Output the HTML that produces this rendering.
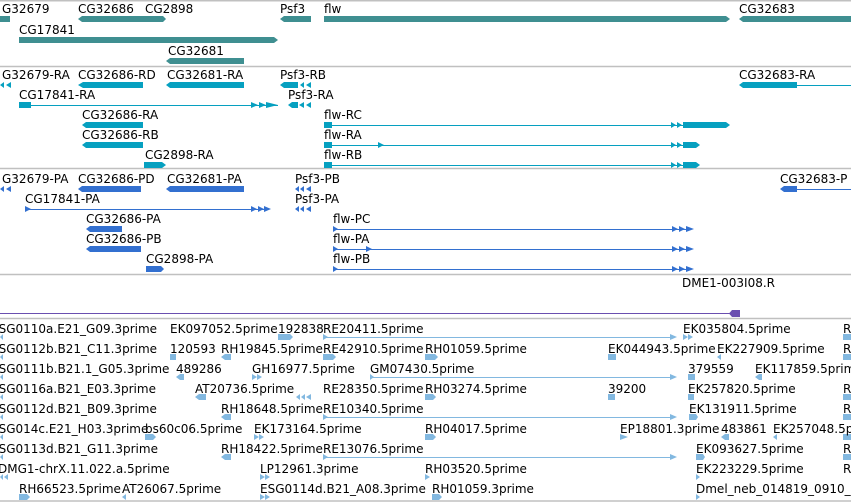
<!DOCTYPE html>
<html><head><meta charset="utf-8"><style>
html,body{margin:0;padding:0;background:#fff;width:851px;height:502px;overflow:hidden}
svg{display:block}
text{font-family:"DejaVu Sans","Liberation Sans",sans-serif;font-size:12px;fill:#000}
</style></head><body>
<svg width="851" height="502" viewBox="0 0 851 502" xmlns="http://www.w3.org/2000/svg">
<g stroke="#c0c0c0" stroke-width="1.5">
<line x1="0" y1="0.75" x2="851" y2="0.75"/>
<line x1="0" y1="66.5" x2="851" y2="66.5"/>
<line x1="0" y1="168.5" x2="851" y2="168.5"/>
<line x1="0" y1="274.5" x2="851" y2="274.5"/>
<line x1="0" y1="318.5" x2="851" y2="318.5"/>
<line x1="0" y1="501" x2="851" y2="501"/>
</g>
<!-- Track 1 genes -->
<g fill="#3f8f91">
<rect x="0" y="16" width="10" height="6"/>
<polygon points="78,19 82,16 163,16 166,19 163,22 82,22"/>
<polygon points="280,19 284,16 311,16 311,22 284,22"/>
<polygon points="324,16 726,16 730,19 726,22 324,22"/>
<polygon points="739,19 743,16 851,16 851,22 743,22"/>
<polygon points="19,37 274,37 278,40 274,43 19,43"/>
<polygon points="166,61 170,58 244,58 244,64 170,64"/>
</g>
<text x="2" y="13">G32679</text><text x="78" y="13">CG32686</text><text x="145" y="13">CG2898</text>
<text x="280" y="13">Psf3</text><text x="324" y="13">flw</text><text x="739" y="13">CG32683</text>
<text x="19" y="34">CG17841</text><text x="168" y="55">CG32681</text>
<!-- Track 2 transcripts -->
<g fill="#06a0c0" stroke="none">
<polygon points="0,85 4,82 4,88"/><polygon points="6,85 11,82 11,88"/>
<polygon points="78,85 83,82 143,82 143,88 83,88"/>
<polygon points="166,85 170,82 244,82 244,88 170,88"/>
<polygon points="280,85 284,82 298,82 298,88 284,88"/><polygon points="300,85 304,82 304,88"/><polygon points="306,85 311,82 311,88"/>
<polygon points="739,85 743,82 797,82 797,88 743,88"/>
<rect x="19" y="102" width="12" height="6"/>
<polygon points="251,102 258,105 251,108"/><polygon points="259,102 266,105 259,108"/><polygon points="266,102 278,105 266,108"/>
<polygon points="288,105 292,102 298,102 298,108 292,108"/><polygon points="299,105 304,102 304,108"/><polygon points="306,105 311,102 311,108"/>
<polygon points="82,125 86,122 143,122 143,128 86,128"/>
<polygon points="671,122 676,125 671,128"/><polygon points="677,122 682,125 677,128"/><polygon points="683,122 726,122 730,125 726,128 683,128"/>
<rect x="324" y="122" width="8" height="6"/>
<polygon points="82,145 86,142 143,142 143,148 86,148"/>
<rect x="324" y="142" width="8" height="6"/><polygon points="378,142 384,145 378,148"/>
<polygon points="671,142 676,145 671,148"/><polygon points="677,142 682,145 677,148"/><polygon points="683,142 696,142 700,145 696,148 683,148"/>
<rect x="144" y="162" width="18" height="6"/><polygon points="162,162 166,165 162,168"/>
<rect x="324" y="162" width="8" height="6"/>
<polygon points="671,162 676,165 671,168"/><polygon points="677,162 682,165 677,168"/><polygon points="683,162 696,162 700,165 696,168 683,168"/>
</g>
<g stroke="#06a0c0" stroke-width="1">
<line x1="797" y1="85.5" x2="851" y2="85.5"/><line x1="19" y1="105.5" x2="278" y2="105.5"/>
<line x1="324" y1="125.5" x2="700" y2="125.5"/><line x1="324" y1="145.5" x2="690" y2="145.5"/><line x1="324" y1="165.5" x2="690" y2="165.5"/>
</g>
<text x="2" y="79">G32679-RA</text><text x="78" y="79">CG32686-RD</text><text x="167" y="79">CG32681-RA</text>
<text x="280" y="79">Psf3-RB</text><text x="739" y="79">CG32683-RA</text>
<text x="19" y="99">CG17841-RA</text><text x="288" y="99">Psf3-RA</text>
<text x="82" y="119">CG32686-RA</text><text x="324" y="119">flw-RC</text>
<text x="82" y="139">CG32686-RB</text><text x="324" y="139">flw-RA</text>
<text x="145" y="159">CG2898-RA</text><text x="324" y="159">flw-RB</text>
<!-- Track 3 proteins -->
<g fill="#3370d0">
<polygon points="0,189 4,186 4,192"/><polygon points="6,189 11,186 11,192"/>
<polygon points="78,189 82,186 141,186 141,192 82,192"/>
<polygon points="166,189 170,186 244,186 244,192 170,192"/>
<polygon points="295,189 299,186 299,192"/><polygon points="300,189 304,186 304,192"/><polygon points="306,189 311,186 311,192"/>
<polygon points="780,189 784,186 797,186 797,192 784,192"/>
<polygon points="25,206 31,209 25,212"/>
<polygon points="251,206 257,209 251,212"/><polygon points="258,206 264,209 258,212"/><polygon points="264,206 271,209 264,212"/>
<polygon points="295,209 299,206 299,212"/><polygon points="300,209 304,206 304,212"/><polygon points="306,209 311,206 311,212"/>
<polygon points="86,229 90,226 122,226 122,232 90,232"/>
<polygon points="86,249 90,246 141,246 141,252 90,252"/>
<polygon points="146,266 161,266 164,269 161,272 146,272"/>
<polygon points="333,226 338,229 333,232"/><polygon points="333,246 338,249 333,252"/><polygon points="366,246 372,249 366,252"/><polygon points="333,266 338,269 333,272"/>
<polygon points="672,226 678,229 672,232"/><polygon points="679,226 685,229 679,232"/><polygon points="686,226 694,229 686,232"/>
<polygon points="672,246 678,249 672,252"/><polygon points="679,246 685,249 679,252"/><polygon points="686,246 694,249 686,252"/>
<polygon points="672,266 678,269 672,272"/><polygon points="679,266 685,269 679,272"/><polygon points="686,266 694,269 686,272"/>
</g>
<g stroke="#3370d0" stroke-width="1">
<line x1="797" y1="189.5" x2="851" y2="189.5"/><line x1="25" y1="209.5" x2="268" y2="209.5"/>
<line x1="333" y1="229.5" x2="690" y2="229.5"/><line x1="333" y1="249.5" x2="690" y2="249.5"/><line x1="333" y1="269.5" x2="690" y2="269.5"/>
</g>
<text x="2" y="183">G32679-PA</text><text x="78" y="183">CG32686-PD</text><text x="167" y="183">CG32681-PA</text>
<text x="295" y="183">Psf3-PB</text><text x="780" y="183">CG32683-P</text>
<text x="25" y="203">CG17841-PA</text><text x="295" y="203">Psf3-PA</text>
<text x="86" y="223">CG32686-PA</text><text x="333" y="223">flw-PC</text>
<text x="86" y="243">CG32686-PB</text><text x="333" y="243">flw-PA</text>
<text x="146" y="263">CG2898-PA</text><text x="333" y="263">flw-PB</text>
<!-- Track 4 -->
<text x="682" y="287">DME1-003I08.R</text>
<line x1="0" y1="313.5" x2="736" y2="313.5" stroke="#6a4fb0" stroke-width="1"/>
<polygon points="732,310 740,310 740,317 732,317 729,313.5" fill="#6a4fb0"/>
<!-- Track 5 ESTs -->
<g stroke="#82b8e0" stroke-width="1">
<line x1="323" y1="337.5" x2="672" y2="337.5"/><line x1="370" y1="377.5" x2="672" y2="377.5"/>
<line x1="323" y1="417.5" x2="672" y2="417.5"/><line x1="323" y1="457.5" x2="672" y2="457.5"/>
</g>
<g fill="#82b8e0">
<polygon points="0,337 3,334 3,340"/><polygon points="278,334 290,334 293,337 290,340 278,340"/><polygon points="323,334 328,337 323,340"/><polygon points="670,334 677,337 670,340"/><polygon points="683,334 688,337 683,340"/><polygon points="688,334 693,337 688,340"/><rect x="843" y="334" width="8" height="6"/>
<polygon points="0,357 3,354 3,360"/><rect x="170" y="354" width="6" height="6"/><polygon points="221,357 225,354 231,354 231,360 225,360"/><polygon points="323,354 333,354 336,357 333,360 323,360"/><polygon points="425,354 435,354 438,357 435,360 425,360"/><rect x="608" y="354" width="8" height="6"/><polygon points="717,357 721,354 721,360"/><rect x="843" y="354" width="8" height="6"/>
<polygon points="0,377 3,374 3,380"/><polygon points="176,377 180,374 184,374 184,380 180,380"/><polygon points="252,374 257,377 252,380"/><polygon points="257,374 262,377 257,380"/><polygon points="370,374 374,377 370,380"/><polygon points="670,374 677,377 670,380"/><rect x="688" y="374" width="7" height="6"/><polygon points="755,377 759,374 762,374 762,380 759,380"/>
<polygon points="0,397 3,394 3,400"/><polygon points="195,397 199,394 206,394 206,400 199,400"/><polygon points="296,397 300,394 300,400"/><polygon points="301,397 305,394 305,400"/><polygon points="306,397 311,394 311,400"/><polygon points="425,394 433,394 436,397 433,400 425,400"/><rect x="608" y="394" width="7" height="6"/><rect x="688" y="394" width="6" height="6"/><rect x="843" y="394" width="8" height="6"/>
<polygon points="0,417 3,414 3,420"/><polygon points="221,417 225,414 231,414 231,420 225,420"/><polygon points="323,414 328,417 323,420"/><polygon points="670,414 677,417 670,420"/><polygon points="689,414 696,414 698,417 696,420 689,420"/><rect x="843" y="414" width="8" height="6"/>
<polygon points="0,437 3,434 3,440"/><polygon points="145,434 153,434 156,437 153,440 145,440"/><polygon points="254,434 259,437 254,440"/><polygon points="259,434 264,437 259,440"/><polygon points="425,434 433,434 436,437 433,440 425,440"/><polygon points="620,434 628,437 620,440"/><polygon points="721,437 725,434 729,434 729,440 725,440"/><polygon points="773,437 777,434 777,440"/><rect x="843" y="434" width="8" height="6"/>
<polygon points="0,457 3,454 3,460"/><polygon points="221,457 225,454 231,454 231,460 225,460"/><polygon points="323,454 328,457 323,460"/><polygon points="670,454 677,457 670,460"/><polygon points="696,454 703,454 705,457 703,460 696,460"/><rect x="843" y="454" width="8" height="6"/>
<polygon points="0,477 3,474 3,480"/><polygon points="4,477 8,474 8,480"/><polygon points="260,474 265,477 260,480"/><polygon points="265,474 270,477 265,480"/><polygon points="425,474 430,477 425,480"/><polygon points="696,474 700,477 696,480"/>
<polygon points="19,494 27,494 30,497 27,500 19,500"/><polygon points="122,497 126,494 126,500"/><polygon points="260,494 265,497 260,500"/><polygon points="265,494 270,497 265,500"/><polygon points="432,494 439,494 442,497 439,500 432,500"/><polygon points="696,494 700,497 696,500"/>
</g>
<text x="-9" y="333">ESG0110a.E21_G09.3prime</text><text x="170" y="333">EK097052.5prime</text><text x="278" y="333">192838</text><text x="323" y="333">RE20411.5prime</text><text x="683" y="333">EK035804.5prime</text><text x="843" y="333">R</text>
<text x="-9" y="353">ESG0112b.B21_C11.3prime</text><text x="170" y="353">120593</text><text x="221" y="353">RH19845.5prime</text><text x="323" y="353">RE42910.5prime</text><text x="425" y="353">RH01059.5prime</text><text x="608" y="353">EK044943.5prime</text><text x="717" y="353">EK227909.5prime</text><text x="843" y="353">R</text>
<text x="-9" y="373">ESG0111b.B21.1_G05.3prime</text><text x="176" y="373">489286</text><text x="252" y="373">GH16977.5prime</text><text x="370" y="373">GM07430.5prime</text><text x="688" y="373">379559</text><text x="755" y="373">EK117859.5prime</text>
<text x="-9" y="393">ESG0116a.B21_E03.3prime</text><text x="195" y="393">AT20736.5prime</text><text x="323" y="393">RE28350.5prime</text><text x="425" y="393">RH03274.5prime</text><text x="608" y="393">39200</text><text x="688" y="393">EK257820.5prime</text><text x="843" y="393">R</text>
<text x="-9" y="413">ESG0112d.B21_B09.3prime</text><text x="221" y="413">RH18648.5prime</text><text x="323" y="413">RE10340.5prime</text><text x="689" y="413">EK131911.5prime</text><text x="843" y="413">R</text>
<text x="-9" y="433">ESG014c.E21_H03.3prime</text><text x="145" y="433">bs60c06.5prime</text><text x="254" y="433">EK173164.5prime</text><text x="425" y="433">RH04017.5prime</text><text x="620" y="433">EP18801.3prime</text><text x="721" y="433">483861</text><text x="773" y="433">EK257048.5prime</text>
<text x="-9" y="453">ESG0113d.B21_G11.3prime</text><text x="221" y="453">RH18422.5prime</text><text x="323" y="453">RE13076.5prime</text><text x="696" y="453">EK093627.5prime</text><text x="843" y="453">R</text>
<text x="-2" y="473">DMG1-chrX.11.022.a.5prime</text><text x="260" y="473">LP12961.3prime</text><text x="425" y="473">RH03520.5prime</text><text x="696" y="473">EK223229.5prime</text><text x="843" y="473">R</text>
<text x="19" y="493">RH66523.5prime</text><text x="122" y="493">AT26067.5prime</text><text x="260" y="493">ESG0114d.B21_A08.3prime</text><text x="432" y="493">RH01059.3prime</text><text x="696" y="493">Dmel_neb_014819_0910_</text>
</svg>
</body></html>
